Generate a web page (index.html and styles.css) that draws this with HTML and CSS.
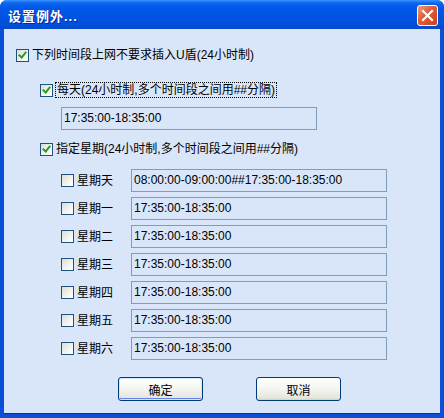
FILE: index.html
```html
<!DOCTYPE html>
<html lang="zh-CN">
<head>
  <meta charset="UTF-8">
  <title>设置例外...</title>
  <link rel="stylesheet" href="styles.css">
</head>
<body>
  <div class="window">
    <div class="titlebar">
      <span class="title">设置例外...</span>
      <span class="close">
        <svg width="13" height="13" viewBox="0 0 13 13"><path d="M2 2 L11 11 M11 2 L2 11" stroke="#fff" stroke-width="2.2" stroke-linecap="square"/></svg>
      </span>
    </div>
    <div class="client">
      <label class="check opt-main"><span class="box on"></span><span>下列时间段上网不要求插入U盾(24小时制)</span></label>

      <label class="check opt-sub"><span class="box on"></span><span class="focus">每天(24小时制,多个时间段之间用##分隔)</span></label>
      <div class="field daily">17:35:00-18:35:00</div>

      <label class="check opt-sub opt-week"><span class="box on"></span><span>指定星期(24小时制,多个时间段之间用##分隔)</span></label>

      <div class="days">
        <div class="day"><label class="check"><span class="box"></span><span>星期天</span></label><div class="field">08:00:00-09:00:00##17:35:00-18:35:00</div></div>
        <div class="day"><label class="check"><span class="box"></span><span>星期一</span></label><div class="field">17:35:00-18:35:00</div></div>
        <div class="day"><label class="check"><span class="box"></span><span>星期二</span></label><div class="field">17:35:00-18:35:00</div></div>
        <div class="day"><label class="check"><span class="box"></span><span>星期三</span></label><div class="field">17:35:00-18:35:00</div></div>
        <div class="day"><label class="check"><span class="box"></span><span>星期四</span></label><div class="field">17:35:00-18:35:00</div></div>
        <div class="day"><label class="check"><span class="box"></span><span>星期五</span></label><div class="field">17:35:00-18:35:00</div></div>
        <div class="day"><label class="check"><span class="box"></span><span>星期六</span></label><div class="field">17:35:00-18:35:00</div></div>
      </div>

      <div class="buttons">
        <button class="btn default">确定</button>
        <button class="btn">取消</button>
      </div>
    </div>
  </div>
</body>
</html>
```

FILE: styles.css
```css
body {
  margin: 0;
  background: #ffffff;
  font-family: "Liberation Sans", "Noto Sans CJK SC", sans-serif;
  font-size: 12px;
  color: #000;
}
.window {
  width: 444px;
  height: 418px;
  display: flex;
  flex-direction: column;
  border-radius: 7px 7px 0 0;
  overflow: hidden;
  background: #0a4fd8;
}
.titlebar {
  height: 29px;
  flex: none;
  display: flex;
  align-items: center;
  justify-content: space-between;
  padding: 0 6px 0 8px;
  background: linear-gradient(#3d95ff 0, #0a66f0 3px, #0058e8 8px, #0054e3 16px, #0150dc 24px, #0348cc 29px);
}
.title {
  color: #fff;
  font-weight: bold;
  font-size: 13px;
  letter-spacing: 1px;
  text-shadow: 1px 1px 0 #0a2a8a;
  margin-top: 2px;
}
.close {
  width: 19px;
  height: 19px;
  border: 1px solid #fff;
  border-radius: 3px;
  background: linear-gradient(135deg, #f09a7c 0, #e0603a 40%, #c8401c 100%);
  display: flex;
  align-items: center;
  justify-content: center;
  margin-top: 2px;
}
.client {
  flex: 1;
  margin: 0 4px 4px 4px;
  background: #d9e6f9;
  border-bottom: 1px solid #08309c;
  padding: 19px 0 0 12px;
}
.check {
  display: flex;
  align-items: center;
  gap: 3px;
  height: 14px;
  line-height: 14px;
  white-space: nowrap;
}
.box {
  width: 11px;
  height: 11px;
  border: 1px solid #1c5180;
  background: linear-gradient(135deg, #dcdcd6 0, #f4f4f0 60%, #ffffff 100%);
  position: relative;
  flex: none;
}
.box.on::after {
  content: "";
  position: absolute;
  left: 3px;
  top: 0px;
  width: 3px;
  height: 6px;
  border: solid #21a121;
  border-width: 0 2px 2px 0;
  transform: rotate(40deg);
}
.focus {
  outline: 1px dotted #000;
  outline-offset: 0;
  padding: 0 1px;
}
.opt-sub {
  margin: 21px 0 0 24px;
}
.opt-week {
  margin-top: 12px;
}
.field {
  box-sizing: border-box;
  width: 256px;
  height: 23px;
  border: 1px solid #7f9db9;
  background: #d9e6f9;
  line-height: 21px;
  padding-left: 2px;
  color: #000;
  font-size: 12px;
  white-space: nowrap;
}
.daily {
  margin: 10px 0 0 45px;
}
.days {
  margin: 13px 0 0 45px;
  display: flex;
  flex-direction: column;
  gap: 5px;
}
.day {
  display: flex;
  align-items: center;
  height: 23px;
}
.day .check {
  width: 70px;
}
.buttons {
  display: flex;
  gap: 53px;
  margin: 17px 0 0 102px;
}
.btn {
  width: 85px;
  height: 24px;
  border: 1px solid #003c74;
  border-radius: 3px;
  background: linear-gradient(#ffffff 0, #f4f4f0 50%, #e6e6df 90%, #d6d0c5 100%);
  font-family: "Liberation Sans", "Noto Sans CJK SC", sans-serif;
  font-size: 12px;
  color: #000;
  padding: 0;
}
.btn.default {
  box-shadow: inset 0 0 0 1px #cee7ff, inset 0 -1px 0 1px #6982ee;
}
```
